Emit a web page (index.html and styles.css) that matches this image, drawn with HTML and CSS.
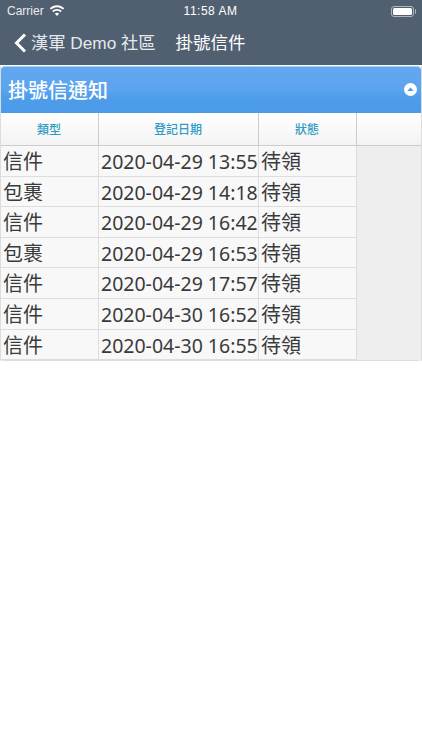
FILE: index.html
```html
<!DOCTYPE html>
<html lang="zh-Hant">
<head>
<meta charset="utf-8">
<title>掛號信件</title>
<link rel="stylesheet" href="styles.css">
</head>
<body>
<header class="topbar">
  <div class="status">
    <div class="status-left">
      <span>Carrier</span>
      <svg class="wifi" viewBox="0 0 16 12" width="16" height="12"><path d="M8 2.200c2.300 0 4.400.9 6 2.400l1.200-1.300C13.300 1.400 10.800.3 8 .3S2.700 1.400.8 3.300L2 4.600c1.600-1.500 3.700-2.400 6-2.400z" fill="#fff"/><path d="M8 5.800c1.300 0 2.500.5 3.400 1.400l1.300-1.300C11.400 4.700 9.800 4 8 4s-3.400.7-4.700 1.900l1.300 1.300C5.500 6.300 6.700 5.800 8 5.800z" fill="#fff"/><path d="M8 7.700c-.9 0-1.600.3-2.200.9L8 11l2.200-2.400c-.6-.6-1.300-.9-2.200-.9z" fill="#fff"/></svg>
    </div>
    <span class="clock">11:58 AM</span>
    <div class="battery"><span class="battery-fill"></span></div>
  </div>
  <nav class="nav">
    <svg class="back" viewBox="0 0 14 20" width="14" height="20"><path d="M12 1.500 3.500 10l8.500 8.500" fill="none" stroke="#fff" stroke-width="3"/></svg>
    <span class="nav-back">漢軍 Demo 社區</span>
    <span class="nav-title">掛號信件</span>
  </nav>
</header>
<main class="panel">
  <div class="panel-head">
    <h1>掛號信通知</h1>
    <svg class="collapse" viewBox="0 0 13 13" width="13" height="13"><circle cx="6.500" cy="6.500" r="6.500" fill="#fff"/><path d="M3.300 8 6.500 4.600 9.700 8z" fill="#4d9cea"/></svg>
  </div>
  <div class="table">
    <div class="row head"><div>類型</div><div>登記日期</div><div>狀態</div><div></div></div>
    <div class="row tall"><div>信件</div><div class="date">2020-04-29 13:55</div><div>待領</div></div>
    <div class="row"><div>包裹</div><div class="date">2020-04-29 14:18</div><div>待領</div></div>
    <div class="row tall"><div>信件</div><div class="date">2020-04-29 16:42</div><div>待領</div></div>
    <div class="row"><div>包裹</div><div class="date">2020-04-29 16:53</div><div>待領</div></div>
    <div class="row tall"><div>信件</div><div class="date">2020-04-29 17:57</div><div>待領</div></div>
    <div class="row tall"><div>信件</div><div class="date">2020-04-30 16:52</div><div>待領</div></div>
    <div class="row"><div>信件</div><div class="date">2020-04-30 16:55</div><div>待領</div></div>
  </div>
</main>
</body>
</html>
```
FILE: styles.css
```css
* { box-sizing: border-box; }
html, body { margin: 0; height: 100%; background: #fff; }
body { font-family: "Noto Sans", "Noto Sans CJK TC", sans-serif; overflow: hidden; }

.topbar { height: 65px; background: #516071; color: #fff; }
.status { height: 22px; padding: 0 8px 0 7px; display: grid; grid-template-columns: 1fr auto 1fr; align-items: center; font: 12px "Liberation Sans", sans-serif; }
.status-left { display: flex; align-items: center; gap: 5px; color: #e8ebee; }
.clock { letter-spacing: .5px; }
.battery { position: relative; justify-self: end; width: 23px; height: 11px; border: 1px solid #aeb5bd; border-radius: 3px; padding: 1px; }
.battery::after { content: ""; position: absolute; top: 2px; right: -3px; width: 1.500px; height: 5px; background: #aeb5bd; border-radius: 0 1px 1px 0; }
.battery-fill { display: block; height: 100%; background: #fff; border-radius: 1.500px; }

.nav { height: 39px; display: flex; align-items: center; padding-left: 13px; }
.back { flex: none; margin-top: 3px; }
.nav-back { margin-left: 4px; font: 17.250px "Liberation Sans", "Noto Sans CJK TC", sans-serif; color: #e6e9ec; }
.nav-title { margin-left: 20px; font: 400 17.500px "Noto Sans CJK TC", sans-serif; }

.panel { margin-top: 1px; border-left: 1px solid #ddd; border-right: 1px solid #ddd; }
.panel-head { height: 47px; padding: 0 4px 2px 7px; display: flex; align-items: center; justify-content: space-between; background: linear-gradient(#62a8f0 0, #5ba4ee 50%, #4e9dea 66%, #4a9aea 100%); border-top: 1px solid #a6cdf3; border-radius: 4px 4px 0 0; }
.panel-head h1 { margin: 0; font: 500 20px "Noto Sans CJK TC", sans-serif; color: #fff; }

.table { background: #eee; border-bottom: 1px solid #ddd; border-radius: 0 0 3px 3px; }
.row { display: grid; grid-template-columns: 98px 160px 98px; grid-template-rows: minmax(0, 1fr); height: 30px; }
.row.tall { height: 31px; }
.row > div { background: #f8f8f8; border-right: 1px solid #ddd; border-bottom: 1px solid #ddd; padding-left: 2px; font-size: 20px; line-height: 31px; color: #3a3a3a; white-space: nowrap; }
.row > .date { font-size: 19.500px; }
.row.head { height: 33px; grid-template-columns: 98px 160px 98px 1fr; }
.row.head > div { background: linear-gradient(#fff, #f3f3f3); border-right: 1px solid #ccc; border-bottom: 1px solid #ccc; padding: 0 1px 0 0; text-align: center; font: 500 12px/31px "Noto Sans CJK TC", sans-serif; color: #2f9bc4; }
.row.head > div:last-child { border-right: 0; }
```
